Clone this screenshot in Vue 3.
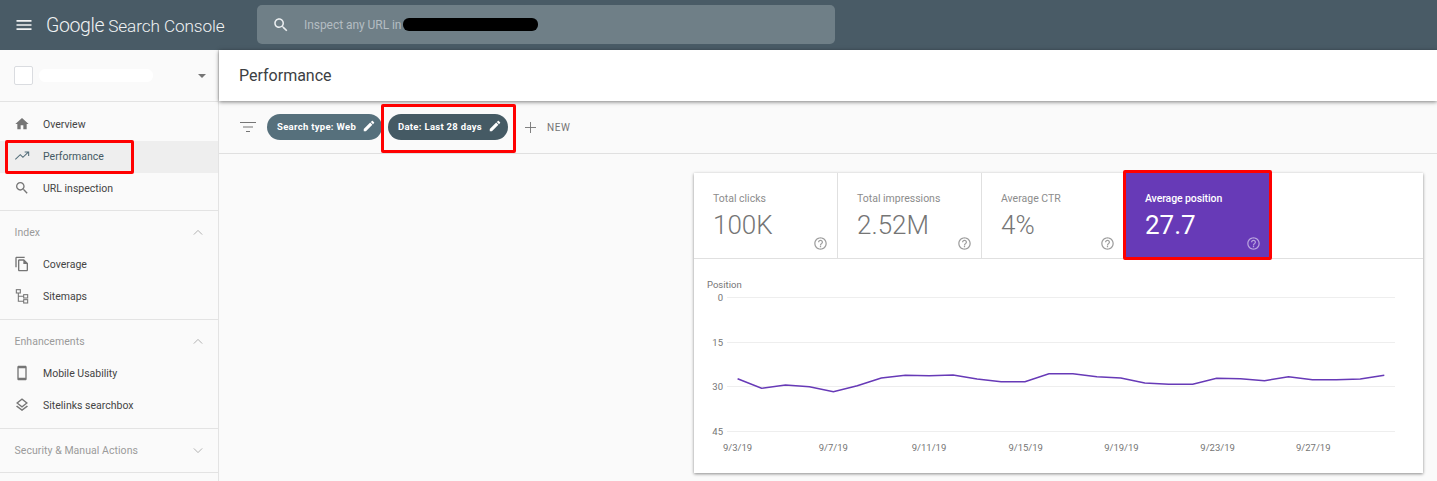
<template>
  <div class="page">
    <header class="topbar">
      <svg class="menu-icon" viewBox="0 0 24 24"><path :d="icons.menu" /></svg>
      <div class="logo"><span class="logo-g">Google</span> <span>Search Console</span></div>
      <div class="search">
        <svg class="search-icon" viewBox="0 0 24 24"><path :d="icons.search" /></svg>
        <span class="search-text">Inspect any URL in</span>
        <span class="redact"></span>
      </div>
    </header>

    <div class="body">
      <aside class="sidebar">
        <div class="property">
          <span class="prop-box"></span>
          <span class="prop-name"></span>
          <span class="prop-caret"></span>
        </div>

        <section v-for="group in navGroups" :key="group.title" class="nav-group">
          <div v-if="group.title" class="nav-title">
            <span>{{ group.title }}</span>
            <svg class="chevron" viewBox="0 0 12 8">
              <polyline :points="group.open ? '1,6.5 6,1.5 11,6.5' : '1,1.5 6,6.5 11,1.5'" />
            </svg>
          </div>
          <div
            v-for="item in group.items"
            :key="item.label"
            class="nav-item"
            :class="{ active: item.active }"
          >
            <svg v-if="item.icon === 'sitemap'" class="nav-icon outline" viewBox="0 0 24 24">
              <rect x="3.5" y="2.5" width="6" height="5" />
              <rect x="14.5" y="10" width="6" height="5" />
              <rect x="14.5" y="17.5" width="6" height="5" />
              <path d="M6.5 7.5V20h8M6.5 12.5h8" />
            </svg>
            <svg v-else-if="item.icon === 'trend'" class="nav-icon outline" viewBox="0 0 24 24">
              <path d="M2 17l7.4-7 4 4L21 6.5M16 6h6v6" />
            </svg>
            <svg v-else class="nav-icon" viewBox="0 0 24 24"><path :d="icons[item.icon]" /></svg>
            <span>{{ item.label }}</span>
          </div>
        </section>
      </aside>

      <main class="main">
        <div class="title-bar">Performance</div>

        <div class="filter-bar">
          <svg class="filter-icon" viewBox="0 0 16 12"><path d="M0 1.5h16M3 6h10M6 10.5h4" /></svg>
          <span class="chip chip-web">
            Search type: Web
            <svg class="pencil" viewBox="0 0 24 24"><path :d="icons.pencil" /></svg>
          </span>
          <span class="chip chip-date">
            Date: Last 28 days
            <svg class="pencil" viewBox="0 0 24 24"><path :d="icons.pencil" /></svg>
          </span>
          <svg class="plus-icon" viewBox="0 0 12 12"><path d="M6 0v12M0 6h12" /></svg>
          <span class="new-btn">NEW</span>
        </div>

        <div class="content">
          <div class="card">
            <div class="tabs">
              <div
                v-for="tab in tabs"
                :key="tab.label"
                class="tab"
                :class="{ selected: tab.selected }"
              >
                <div class="tab-label">{{ tab.label }}</div>
                <div class="tab-value">{{ tab.value }}</div>
                <svg class="help" viewBox="0 0 24 24"><path :d="icons.help" /></svg>
              </div>
            </div>

            <svg class="chart" viewBox="0 0 729 214">
              <text class="axis-title" x="13" y="28.5">Position</text>
              <g v-for="tick in yTicks" :key="tick.label">
                <line class="grid" x1="33" :y1="tick.y" x2="701" :y2="tick.y" />
                <text class="axis" x="29" :y="tick.y + 3.5" text-anchor="end">{{ tick.label }}</text>
              </g>
              <polyline class="series" :points="linePoints" />
              <text
                v-for="d in xTicks"
                :key="d.label"
                class="axis"
                :x="d.x"
                y="191.5"
                text-anchor="middle"
              >{{ d.label }}</text>
            </svg>
          </div>
        </div>
      </main>
    </div>
  </div>
</template>

<script setup>
import { computed } from 'vue'

const icons = {
  menu: 'M3 18h18v-2H3v2zm0-5h18v-2H3v2zm0-7v2h18V6H3z',
  search: 'M15.5 14h-.79l-.28-.27C15.41 12.59 16 11.11 16 9.5 16 5.91 13.09 3 9.5 3S3 5.91 3 9.5 5.91 16 9.5 16c1.61 0 3.09-.59 4.23-1.57l.27.28v.79l5 4.99L20.49 19l-4.99-5zm-6 0C7.01 14 5 11.99 5 9.5S7.01 5 9.5 5 14 7.01 14 9.5 11.99 14 9.5 14z',
  home: 'M10 20v-6h4v6h5v-8h3L12 3 2 12h3v8z',
  copy: 'M16 1H4c-1.1 0-2 .9-2 2v14h2V3h12V1zm-1 4H8c-1.1 0-2 .9-2 2v14c0 1.1.89 2 1.99 2H19c1.1 0 2-.9 2-2V11l-6-6zM8 21V7h6v5h5v9H8z',
  phone: 'M17 1.01L7 1c-1.1 0-2 .9-2 2v18c0 1.1.9 2 2 2h10c1.1 0 2-.9 2-2V3c0-1.1-.9-1.99-2-1.99zM17 19H7V5h10v14z',
  layers: 'M11.99 18.54l-7.37-5.73L3 14.07l9 7 9-7-1.63-1.27zM12 16l7.36-5.73L21 9l-9-7-9 7 1.63 1.27L12 16zm0-11.47L17.74 9 12 13.47 6.26 9 12 4.53z',
  pencil: 'M3 17.25V21h3.75L17.81 9.94l-3.75-3.75L3 17.25zM20.71 7.04c.39-.39.39-1.02 0-1.41l-2.34-2.34c-.39-.39-1.02-.39-1.41 0l-1.83 1.83 3.75 3.75 1.83-1.83z',
  help: 'M11 18h2v-2h-2v2zm1-16C6.48 2 2 6.48 2 12s4.48 10 10 10 10-4.48 10-10S17.52 2 12 2zm0 18c-4.41 0-8-3.59-8-8s3.59-8 8-8 8 3.59 8 8-3.59 8-8 8zm0-14c-2.21 0-4 1.79-4 4h2c0-1.1.9-2 2-2s2 .9 2 2c0 2-3 1.75-3 5h2c0-2.25 3-2.5 3-5 0-2.21-1.79-4-4-4z',
}

const navGroups = [
  {
    title: '',
    items: [
      { label: 'Overview', icon: 'home' },
      { label: 'Performance', icon: 'trend', active: true },
      { label: 'URL inspection', icon: 'search' },
    ],
  },
  {
    title: 'Index',
    open: true,
    items: [
      { label: 'Coverage', icon: 'copy' },
      { label: 'Sitemaps', icon: 'sitemap' },
    ],
  },
  {
    title: 'Enhancements',
    open: true,
    items: [
      { label: 'Mobile Usability', icon: 'phone' },
      { label: 'Sitelinks searchbox', icon: 'layers' },
    ],
  },
  { title: 'Security & Manual Actions', open: false, items: [] },
]

const tabs = [
  { label: 'Total clicks', value: '100K' },
  { label: 'Total impressions', value: '2.52M' },
  { label: 'Average CTR', value: '4%' },
  { label: 'Average position', value: '27.7', selected: true },
]

const yTicks = [
  { label: '0', y: 38.5 },
  { label: '15', y: 83.5 },
  { label: '30', y: 127.5 },
  { label: '45', y: 172.5 },
]

const xTicks = [
  { label: '9/3/19', x: 43.6 },
  { label: '9/7/19', x: 139.3 },
  { label: '9/11/19', x: 235 },
  { label: '9/15/19', x: 331.7 },
  { label: '9/19/19', x: 427.4 },
  { label: '9/23/19', x: 523.6 },
  { label: '9/27/19', x: 619.3 },
]

// y values read off the reference, in chart coordinates
const series = [
  119.7, 129.3, 126, 127.7, 132.7, 126.7, 119, 116.3, 116.7, 116, 120, 122.7, 122.7, 114.7,
  114.7, 117.7, 119, 124, 125.3, 125.3, 119.3, 119.7, 121.7, 117.7, 120.7, 120.7, 120, 116.3,
]

const linePoints = computed(() =>
  series.map((y, i) => `${(43.6 + i * 23.95).toFixed(1)},${y}`).join(' ')
)
</script>

<style scoped>
.page {
  width: 1437px;
  height: 481px;
  overflow: hidden;
  display: flex;
  flex-direction: column;
  background: #fafafa;
  font-family: Roboto, "Liberation Sans", sans-serif;
  color: #5f6368;
}

/* top bar */
.topbar {
  height: 50px;
  flex: none;
  display: flex;
  align-items: center;
  background: #495b66;
  color: #fff;
}
.menu-icon {
  width: 20px;
  height: 20px;
  margin-left: 14px;
  fill: #f1f3f4;
}
.logo {
  margin-left: 12px;
  width: 212px;
  font-size: 17.2px;
  font-weight: 300;
  letter-spacing: -0.1px;
  white-space: nowrap;
  color: #f1f3f4;
}
.logo-g {
  font-size: 19.5px;
  letter-spacing: -0.4px;
}
.search {
  width: 578px;
  height: 39px;
  margin-bottom: 1px;
  margin-left: -1px;
  display: flex;
  align-items: center;
  border-radius: 5px;
  background: #6f7f87;
}
.search-icon {
  width: 18px;
  height: 18px;
  margin-left: 15px;
  fill: #eceff1;
}
.search-text {
  margin-left: 14px;
  font-size: 12px;
  color: #b4bdc2;
  letter-spacing: -0.05px;
}
.redact {
  width: 135px;
  height: 13px;
  margin-left: 2px;
  border-radius: 6px;
  background: #000;
}

.body {
  flex: 1;
  display: flex;
  min-height: 0;
}

/* sidebar */
.sidebar {
  width: 218px;
  flex: none;
  border-right: 1px solid #e3e3e3;
  background: #fafafa;
}
.property {
  height: 51px;
  display: flex;
  align-items: center;
  border-bottom: 1px solid #e3e3e3;
  padding-left: 14px;
}
.prop-box {
  width: 17px;
  height: 17px;
  border: 1px solid #dadce0;
  border-radius: 2px;
  background: #fff;
}
.prop-name {
  width: 114px;
  height: 13px;
  margin-left: 6px;
  border-radius: 6px;
  background: #fff;
}
.prop-caret {
  margin-left: 45px;
  border-left: 4.5px solid transparent;
  border-right: 4.5px solid transparent;
  border-top: 4.5px solid #757575;
}
.nav-group {
  padding-bottom: 6px;
  border-bottom: 1px solid #e3e3e3;
}
.nav-group:first-of-type {
  padding-top: 7px;
  padding-bottom: 5px;
}
.nav-group:last-child {
  height: 43px;
  padding-bottom: 0;
}
.nav-title {
  height: 38px;
  display: flex;
  align-items: center;
  justify-content: space-between;
  padding: 4px 15px 0 14.5px;
  box-sizing: border-box;
  font-size: 10.5px;
  letter-spacing: 0.05px;
  color: #9a9a9a;
}
.nav-group:last-child .nav-title {
  height: 43px;
  padding-top: 0;
}
.chevron {
  width: 10px;
  height: 7px;
  fill: none;
  stroke: #a3a3a3;
  stroke-width: 1;
}
.nav-item {
  position: relative;
  height: 32px;
  box-sizing: border-box;
  display: flex;
  align-items: center;
  padding: 0 0 2px 14px;
  font-size: 10.5px;
  color: #444;
}
.nav-item.active {
  background: #eeeeee;
  color: #455a64;
}
.nav-item.active::after {
  content: "";
  position: absolute;
  left: 5px;
  top: -1px;
  width: 129px;
  height: 34px;
  box-sizing: border-box;
  border: 3px solid #f00;
  border-radius: 2px;
}
.nav-icon {
  width: 16px;
  height: 16px;
  margin-right: 13px;
  fill: #757575;
}
.nav-icon.outline {
  fill: none;
  stroke: #757575;
  stroke-width: 1.6;
}
.nav-item.active .nav-icon {
  stroke: #546e7a;
}

/* main */
.main {
  flex: 1;
  min-width: 0;
  display: flex;
  flex-direction: column;
}
.title-bar {
  position: relative;
  height: 51px;
  flex: none;
  display: flex;
  align-items: center;
  padding-left: 20px;
  background: #fff;
  box-shadow: 0 1px 4px rgba(0, 0, 0, 0.5);
  font-size: 16px;
  color: #3c4043;
}
.filter-bar {
  height: 53px;
  flex: none;
  box-sizing: border-box;
  display: flex;
  align-items: center;
  padding-left: 21px;
  border-bottom: 1px solid #e0e0e0;
  background: #fafafa;
}
.filter-icon {
  width: 16px;
  height: 12px;
  fill: none;
  stroke: #757575;
  stroke-width: 1;
}
.chip {
  position: relative;
  height: 26px;
  box-sizing: border-box;
  display: flex;
  align-items: center;
  justify-content: space-between;
  padding: 0 6px 2px 10px;
  border-radius: 13px;
  font-size: 9.5px;
  font-weight: 700;
  letter-spacing: 0.3px;
  white-space: nowrap;
  color: #fff;
}
.chip-web {
  width: 115px;
  margin-left: 11px;
  background: #56707c;
}
.chip-date {
  width: 120px;
  margin-left: 6px;
  background: #455a64;
}
.chip-date::after {
  content: "";
  position: absolute;
  left: -7px;
  top: -10px;
  width: 135px;
  height: 49px;
  box-sizing: border-box;
  border: 3px solid #f00;
  border-radius: 2px;
}
.pencil {
  width: 14px;
  height: 14px;
  fill: #fff;
}
.plus-icon {
  width: 11px;
  height: 11px;
  margin-left: 17px;
  fill: none;
  stroke: #757575;
  stroke-width: 1;
}
.new-btn {
  margin-left: 11px;
  font-size: 10px;
  letter-spacing: 0.55px;
  color: #757575;
}

.content {
  flex: 1;
  padding: 19px 0 0 475px;
  min-height: 0;
}
.card {
  width: 729px;
  height: 300px;
  background: #fff;
  box-shadow: 0 1px 3px rgba(0, 0, 0, 0.45);
}
.tabs {
  display: flex;
  height: 85px;
  border-bottom: 1px solid #e0e0e0;
  box-sizing: content-box;
}
.tab {
  position: relative;
  width: 144px;
  box-sizing: border-box;
  padding: 20px 0 0 19px;
  border-right: 1px solid #e0e0e0;
  color: #757575;
}
.tab:nth-child(3) {
  width: 142px;
  border-right: 0;
}
.tab-label {
  font-size: 10.5px;
  line-height: 12px;
  color: #8c8c8c;
}
.tab-value {
  margin-top: 5px;
  font-size: 26px;
  font-weight: 300;
  line-height: 30px;
}
.help {
  position: absolute;
  right: 9.5px;
  bottom: 7.5px;
  width: 15px;
  height: 15px;
  fill: #9e9e9e;
}
.tab.selected {
  width: 147px;
  height: 85px;
  padding-left: 21px;
  border-right: 0;
  background: #673ab7;
  color: #fff;
}
.tab.selected::after {
  content: "";
  position: absolute;
  left: -1px;
  top: -3px;
  width: 149px;
  height: 90px;
  box-sizing: border-box;
  border: 3px solid #f00;
  border-radius: 2px;
}
.tab.selected .tab-label {
  font-weight: 500;
  letter-spacing: -0.1px;
  color: #fff;
}
.tab.selected .tab-value {
  font-weight: 400;
  color: #fff;
}
.tab.selected .help {
  right: 10.5px;
  fill: #b9a3de;
}
.chart {
  display: block;
  width: 729px;
  height: 214px;
}
.grid {
  stroke: #eeeeee;
  stroke-width: 1;
}
.axis,
.axis-title {
  font-family: Roboto, "Liberation Sans", sans-serif;
  font-size: 9.5px;
  fill: #757575;
}
.series {
  fill: none;
  stroke: #673ab7;
  stroke-width: 1.6;
}
</style>

<style>
html,
body {
  margin: 0;
  background: #fafafa;
}
</style>
